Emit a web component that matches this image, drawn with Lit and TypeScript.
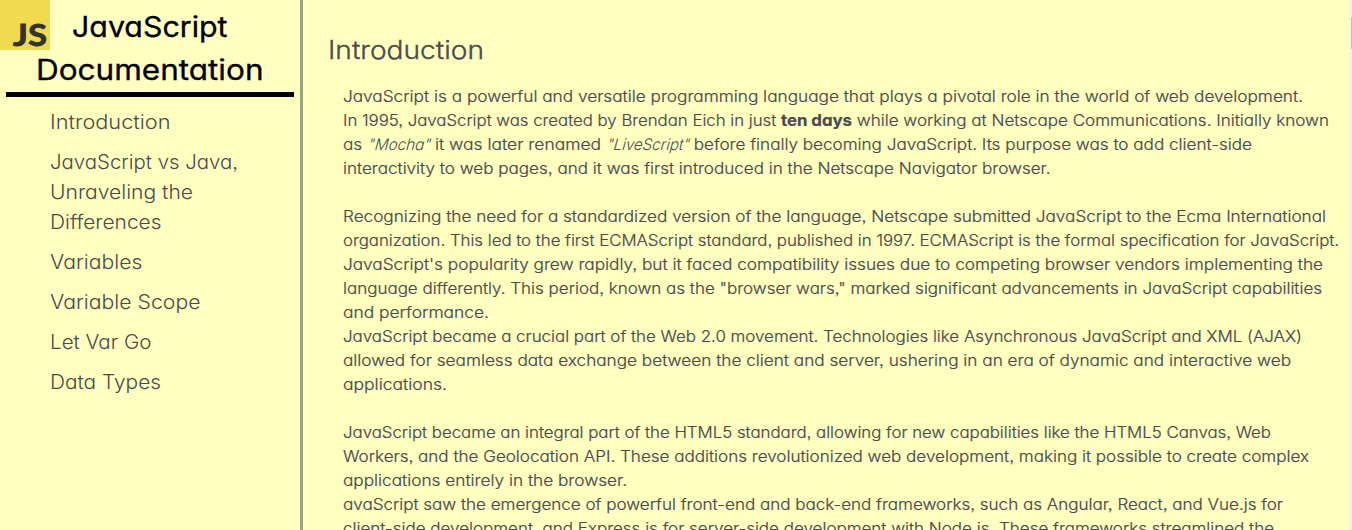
import { LitElement, html, css } from "lit";
import { customElement } from "lit/decorators.js";

type Run = { text: string; width: number; kind?: "strong" | "em" };
type Line = Run[];

const one = (text: string, width: number): Line => [{ text, width }];

const HEADING: Line[] = [one("JavaScript", 155.5), one("Documentation", 227.5)];

const NAV: Line[][] = [
  [one("Introduction", 120.5)],
  [one("JavaScript vs Java,", 188), one("Unraveling the", 143), one("Differences", 111.5)],
  [one("Variables", 92.5)],
  [one("Variable Scope", 150.5)],
  [one("Let Var Go", 101.5)],
  [one("Data Types", 111)],
];

const PARAGRAPHS: Line[][] = [
  [
    one("JavaScript is a powerful and versatile programming language that plays a pivotal role in the world of web development.", 960),
    [
      { text: "In 1995, JavaScript was created by Brendan Eich in just ", width: 438 },
      { text: "ten days", width: 71, kind: "strong" },
      { text: " while working at Netscape Communications. Initially known", width: 477 },
    ],
    [
      { text: "as ", width: 24 },
      { text: "\"Mocha\"", width: 63, kind: "em" },
      { text: " it was later renamed ", width: 176 },
      { text: "\"LiveScript\"", width: 83, kind: "em" },
      { text: " before finally becoming JavaScript. Its purpose was to add client-side", width: 563 },
    ],
    one("interactivity to web pages, and it was first introduced in the Netscape Navigator browser.", 707.5),
  ],
  [
    one("Recognizing the need for a standardized version of the language, Netscape submitted JavaScript to the Ecma International", 983),
    one("organization. This led to the first ECMAScript standard, published in 1997. ECMAScript is the formal specification for JavaScript.", 996),
    one("JavaScript's popularity grew rapidly, but it faced compatibility issues due to competing browser vendors implementing the", 980),
    one("language differently. This period, known as the \"browser wars,\" marked significant advancements in JavaScript capabilities", 979),
    one("and performance.", 146),
    one("JavaScript became a crucial part of the Web 2.0 movement. Technologies like Asynchronous JavaScript and XML (AJAX)", 959),
    one("allowed for seamless data exchange between the client and server, ushering in an era of dynamic and interactive web", 948),
    one("applications.", 104),
  ],
  [
    one("JavaScript became an integral part of the HTML5 standard, allowing for new capabilities like the HTML5 Canvas, Web", 928),
    one("Workers, and the Geolocation API. These additions revolutionized web development, making it possible to create complex", 966),
    one("applications entirely in the browser.", 284),
    one("avaScript saw the emergence of powerful front-end and back-end frameworks, such as Angular, React, and Vue.js for", 940),
    one("client-side development, and Express.js for server-side development with Node.js. These frameworks streamlined the", 931),
  ],
];

@customElement("app-root")
export class AppRoot extends LitElement {
  static styles = css`
    :host {
      display: flex;
      box-sizing: border-box;
      width: 100%;
      height: 530px;
      overflow: hidden;
      background: #ffffc0;
      color: #4a4a4f;
      font-family: Inter, "Open Sans", sans-serif;
      font-optical-sizing: none;
      font-feature-settings: "cv11" 1, "ss03" 1, "calt" 0;
    }
    .sidebar {
      position: relative;
      box-sizing: border-box;
      flex: 0 0 303px;
      border-right: 3px solid #99a580;
      padding: 5px 6px 0;
    }
    .logo {
      position: absolute;
      left: 0;
      top: 0;
      width: 50px;
      height: 50px;
      overflow: visible;
    }
    .logo text {
      font-family: Lato, sans-serif;
      font-weight: 700;
      font-size: 31px;
      fill: #323330;
      stroke: #323330;
      stroke-width: 0.8px;
    }
    h1 {
      margin: 0;
      height: 87px;
      border-bottom: 5px solid #000;
      color: #000;
      font-size: 28.4px;
      line-height: 43px;
      font-weight: 400;
      -webkit-text-stroke: 0.3px #000;
      text-align: center;
    }
    ul {
      list-style: none;
      margin: 0;
      padding: 10px 0 0 44px;
      display: flex;
      flex-direction: column;
      gap: 10px;
      font-size: 19.6px;
      font-weight: 300;
      line-height: 30px;
    }
    .line {
      display: block;
      white-space: pre;
    }
    .run {
      display: inline-block;
      transform-origin: 0 70%;
      text-align: left;
    }
    main {
      flex: 1;
      min-width: 0;
      padding: 30px 0 0 25px;
    }
    h2 {
      margin: 0 0 15px;
      font-size: 25.6px;
      font-weight: 300;
      -webkit-text-stroke: 0.35px #4a4a4f;
      line-height: 40px;
    }
    article {
      display: flex;
      flex-direction: column;
      gap: 24px;
      padding-left: 15px;
      font-size: 15.8px;
      font-weight: 300;
      -webkit-text-stroke: 0.22px #4a4a4f;
      line-height: 24px;
    }
    p {
      margin: 0;
    }
    .strong {
      font-weight: 700;
    }
    .em {
      font-weight: 300;
      -webkit-text-stroke: 0;
    }
    .track {
      flex: 0 0 3px;
      padding: 17px 0 0 2px;
      box-sizing: border-box;
      background: #f1f1f1;
    }
    .thumb {
      height: 32px;
      background: #c1c1c1;
    }
  `;

  firstUpdated() {
    const runs = [...this.renderRoot.querySelectorAll<HTMLElement>("[data-width]")];
    const natural = runs.map((run) => run.getBoundingClientRect().width);
    runs.forEach((run, i) => {
      const target = Number(run.dataset.width);
      const slant = run.classList.contains("em") ? "skewX(-15deg) " : "";
      run.style.width = `${target}px`;
      run.style.transform = `${slant}scaleX(${target / natural[i]})`;
    });
  }

  private line(line: Line) {
    return html`<span class="line">${line.map(
      (r) => html`<span class="run ${r.kind ?? "plain"}" data-width=${r.width}>${r.text}</span>`
    )}</span>`;
  }

  render() {
    return html`
      <nav class="sidebar">
        <svg class="logo" viewBox="0 0 50 50">
          <rect width="50" height="50" fill="#f0db4f"></rect>
          <text x="13" y="45.5" textLength="34" lengthAdjust="spacingAndGlyphs">JS</text>
        </svg>
        <h1>${HEADING.map((l) => this.line(l))}</h1>
        <ul>
          ${NAV.map((item) => html`<li>${item.map((l) => this.line(l))}</li>`)}
        </ul>
      </nav>
      <main>
        <h2>${this.line(one("Introduction", 156))}</h2>
        <article>
          ${PARAGRAPHS.map((p) => html`<p>${p.map((l) => this.line(l))}</p>`)}
        </article>
      </main>
      <div class="track"><div class="thumb"></div></div>
    `;
  }
}
